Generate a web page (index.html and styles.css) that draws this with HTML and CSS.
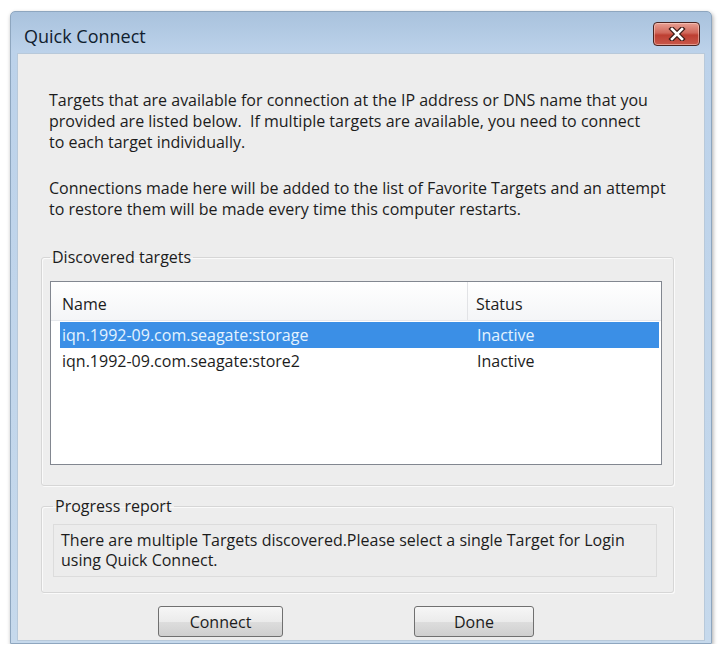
FILE: index.html
```html
<!DOCTYPE html>
<html lang="en">
<head>
  <meta charset="UTF-8" />
  <title>Quick Connect</title>
  <link rel="stylesheet" href="styles.css">
</head>
<body>
  <div class="window">
    <div class="titlebar">
      <span class="title">Quick Connect</span>
      <button type="button" class="close-btn" aria-label="Close">
        <svg width="18" height="14" viewBox="0 0 18 14">
          <path d="M4 2 L14 12 M14 2 L4 12" stroke="#3a1a16" stroke-width="5" stroke-linecap="square"/>
          <path d="M4 2 L14 12 M14 2 L4 12" stroke="#fff" stroke-width="2.6" stroke-linecap="square"/>
        </svg>
      </button>
    </div>
    <div class="client">
      <p class="intro">Targets that are available for connection at the IP address or DNS name that you<br>provided are listed below.&nbsp; If multiple targets are available, you need to connect<br>to each target individually.</p>
      <p class="intro second">Connections made here will be added to the list of Favorite Targets and an attempt<br>to restore them will be made every time this computer restarts.</p>

      <fieldset class="group targets">
        <legend>Discovered targets</legend>
        <div class="listview">
          <div class="list-header">
            <div class="col-name">Name</div>
            <div class="col-status">Status</div>
          </div>
          <div class="list-row selected">
            <div class="col-name">iqn.1992-09.com.seagate:storage</div>
            <div class="col-status">Inactive</div>
          </div>
          <div class="list-row">
            <div class="col-name">iqn.1992-09.com.seagate:store2</div>
            <div class="col-status">Inactive</div>
          </div>
        </div>
      </fieldset>

      <fieldset class="group progress">
        <legend>Progress report</legend>
        <div class="report">There are multiple Targets discovered.Please select a single Target for Login<br>using Quick Connect.</div>
      </fieldset>

      <div class="buttons">
        <button type="button" class="btn">Connect</button>
        <button type="button" class="btn done">Done</button>
      </div>
    </div>
  </div>
</body>
</html>
```

FILE: styles.css
```css
body {
  margin: 0;
  background: #fff;
  font-family: 'Open Sans', 'Noto Sans', sans-serif;
  color: #1c1c1c;
}
.window {
  margin: 11px 0 0 10px;
  width: 702px;
  height: 633px;
  box-sizing: border-box;
  border: 1px solid #8ea6bf;
  border-radius: 5px 5px 0 0;
  background: linear-gradient(to bottom, #a9c2dd, #bcd2ea 40px, #c6d9ec);
  padding: 0 6px 2px 6px;
  display: flex;
  flex-direction: column;
  box-shadow: 1px 2px 4px rgba(0, 0, 0, 0.35);
}
.titlebar {
  height: 41px;
  display: flex;
  align-items: center;
  justify-content: space-between;
}
.title {
  font-size: 18px;
  color: #10202e;
  margin-left: 7px;
  margin-top: 6px;
}
.close-btn {
  width: 47px;
  height: 24px;
  margin-top: 2px;
  margin-right: 5px;
  border: 1px solid #4a2420;
  border-radius: 4px;
  background: linear-gradient(to bottom, #e8a093, #d0675a 45%, #bd3f32 55%, #c9584a);
  box-shadow: inset 0 0 0 1px rgba(255, 220, 210, 0.5);
  padding: 0;
  display: flex;
  align-items: center;
  justify-content: center;
}
.client {
  flex: 1;
  background: #ededed;
  border: 1px solid #b8c9da;
  padding: 36px 30px 0 23px;
  font-size: 16px;
}
.intro {
  margin: 0 0 0 8px;
  line-height: 21px;
  white-space: nowrap;
}
.intro.second {
  margin-top: 25px;
}
.group {
  margin: 27px 0 0 0;
  border: 1px solid #d6d6d6;
  border-radius: 3px;
  box-shadow: 1px 1px 0 #fafafa inset, 1px 1px 0 #fafafa;
  padding: 14px 11px 20px 8px;
}
.group legend {
  padding: 0 2px;
  margin-left: 0;
  line-height: 20px;
  font-size: 16px;
}
.listview {
  height: 182px;
  background: #fff;
  border: 1px solid #828790;
}
.list-header {
  display: flex;
  height: 33px;
  padding-top: 5px;
  align-items: center;
  background: linear-gradient(to bottom, #fff, #f4f5f7);
  border-bottom: 1px solid #e6e8ec;
}
.list-header .col-status {
  border-left: 1px solid #e2e3e6;
  align-self: stretch;
  margin-top: -5px;
  padding-top: 5px;
  display: flex;
  align-items: center;
}
.col-name {
  width: 405px;
  padding-left: 11px;
}
.col-status {
  padding-left: 8px;
}
.list-row {
  display: flex;
  height: 26px;
  align-items: center;
  margin: 0 2px 0 9px;
}
.list-row .col-name {
  width: 405px;
  padding-left: 2px;
}
.list-row .col-status {
  padding-left: 10px;
}
.list-row.selected {
  margin-top: 1px;
  background: #3b8fe6;
  color: #e4f3ff;
}
.group.progress {
  margin-top: 10px;
  padding: 8px 16px 15px 11px;
}
.report {
  height: 46px;
  border: 1px solid #dcdcdc;
  background: #ececec;
  padding: 5px 7px 0 7px;
  line-height: 20px;
  white-space: nowrap;
}
.buttons {
  display: flex;
  gap: 131px;
  padding-left: 117px;
  margin-top: 13px;
}
.btn {
  width: 125px;
  height: 31px;
  border: 1px solid #707070;
  border-radius: 3px;
  background: linear-gradient(to bottom, #f6f6f6, #ebebeb 50%, #dddddd 51%, #cfcfcf);
  font-family: 'Open Sans', 'Noto Sans', sans-serif;
  font-size: 16px;
  color: #1c1c1c;
  padding: 0;
}
.btn.done {
  width: 120px;
}
```
